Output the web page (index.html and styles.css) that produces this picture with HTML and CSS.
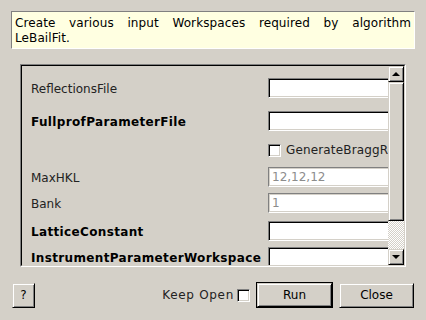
FILE: index.html
```html
<!DOCTYPE html>
<html lang="en">

<head>
    <meta charset="UTF-8">
    <title>LeBailFit Workspaces</title>
    <link rel="stylesheet" href="styles.css">
</head>

<body>

    <div class="description">
        Create various input Workspaces required by algorithm LeBailFit.
    </div>

    <div class="frame">
        <div class="frame-inner">
            <div class="properties">
                <div class="label">ReflectionsFile</div>
                <div class="field"></div>

                <div class="label bold">FullprofParameterFile</div>
                <div class="field"></div>

                <div class="label"></div>
                <div class="check-row">
                    <span class="check"></span>
                    <span class="check-text">GenerateBraggReflections</span>
                </div>

                <div class="label">MaxHKL</div>
                <div class="field disabled">12,12,12</div>

                <div class="label">Bank</div>
                <div class="field disabled">1</div>

                <div class="label bold">LatticeConstant</div>
                <div class="field"></div>

                <div class="label bold">InstrumentParameterWorkspace</div>
                <div class="field"></div>
            </div>

            <div class="scrollbar">
                <div class="sb-button"><span class="arrow-up"></span></div>
                <div class="sb-thumb"></div>
                <div class="sb-track"></div>
                <div class="sb-button"><span class="arrow-down"></span></div>
            </div>
        </div>
    </div>

    <div class="footer">
        <div class="button help">?</div>
        <div class="keep-open">Keep Open</div>
        <span class="check"></span>
        <div class="default-ring"><div class="button run">Run</div></div>
        <div class="button close">Close</div>
    </div>

</body>
</html>
```

FILE: styles.css
```css
body {
    margin: 0;
    padding-top: 11px;
    background-color: #d4d0c8;
    font-family: "DejaVu Sans", sans-serif;
    font-size: 12px;
    color: #000;
    overflow: hidden;
}

.description {
    margin: 0 11px;
    height: 32px;
    padding: 4px 3px 0 3px;
    background-color: #ffffe1;
    border: 1px solid;
    border-color: #808080 #fff #fff #808080;
    line-height: 15px;
    letter-spacing: 0.1px;
    text-align: justify;
}

.frame {
    margin: 15px 20px 0 20px;
    height: 203px;
    box-sizing: border-box;
    border: 1px solid;
    border-color: #808080 #fff #fff #808080;
}

.frame-inner {
    height: 100%;
    box-sizing: border-box;
    border: 1px solid;
    border-color: #000 #d4d0c8 #d4d0c8 #000;
    display: flex;
}

.properties {
    flex: 1;
    overflow: hidden;
    padding: 12px 0 0 9px;
    display: grid;
    grid-template-columns: 237px 130px;
    grid-template-rows: 33px 30px 26px 26px 28px 26px 20px;
    align-items: start;
}

.label {
    padding-top: 1px;
    line-height: 20px;
    color: #222;
    white-space: nowrap;
}

.bold {
    font-weight: bold;
    letter-spacing: 0.35px;
    color: #000;
}

.field {
    height: 20px;
    box-sizing: border-box;
    background-color: #fff;
    border: 1px solid;
    border-color: #808080 #fff #fff #808080;
    box-shadow: inset 1px 1px #000, inset -1px -1px #d4d0c8;
    padding-left: 3px;
    line-height: 18px;
}

.field.disabled {
    color: #8c8c8c;
    box-shadow: inset 1px 1px #d4d0c8, inset -1px -1px #d4d0c8;
}

.check-row {
    height: 18px;
    display: flex;
    align-items: center;
    white-space: nowrap;
    overflow: hidden;
}

.check {
    display: inline-block;
    width: 13px;
    height: 13px;
    box-sizing: border-box;
    background-color: #fff;
    border: 1px solid;
    border-color: #808080 #fff #fff #808080;
    box-shadow: inset 1px 1px #000, inset -1px -1px #d4d0c8;
    flex-shrink: 0;
}

.check-text {
    margin-left: 5px;
    letter-spacing: 0.15px;
    color: #222;
}

.scrollbar {
    width: 16px;
    display: flex;
    flex-direction: column;
}

.sb-button,
.sb-thumb,
.button {
    box-sizing: border-box;
    background-color: #d4d0c8;
    border: 1px solid;
    border-color: #d4d0c8 #000 #000 #d4d0c8;
    box-shadow: inset 1px 1px #fff, inset -1px -1px #808080;
}

.sb-button {
    height: 16px;
    display: flex;
    align-items: center;
    justify-content: center;
}

.sb-thumb {
    height: 139px;
}

.sb-track {
    flex: 1;
    background: repeating-conic-gradient(#fff 0 25%, #d4d0c8 0 50%) 0 0 / 2px 2px;
}

.arrow-up {
    width: 0;
    height: 0;
    border-left: 4px solid transparent;
    border-right: 4px solid transparent;
    border-bottom: 4px solid #000;
}

.arrow-down {
    width: 0;
    height: 0;
    border-left: 4px solid transparent;
    border-right: 4px solid transparent;
    border-top: 4px solid #000;
}

.footer {
    margin-top: 15px;
    padding: 0 12px;
    display: flex;
    align-items: center;
}

.button {
    height: 25px;
    display: flex;
    align-items: center;
    justify-content: center;
    color: #000;
}

.help {
    width: 23px;
    margin-right: auto;
}

.keep-open {
    margin-right: 3px;
    letter-spacing: 0.7px;
    color: #222;
}

.footer .check {
    margin-right: 6px;
}

.default-ring {
    border: 1px solid #000;
    margin-right: 6px;
}

.run {
    width: 75px;
    height: 24px;
}

.close {
    width: 75px;
}
```
